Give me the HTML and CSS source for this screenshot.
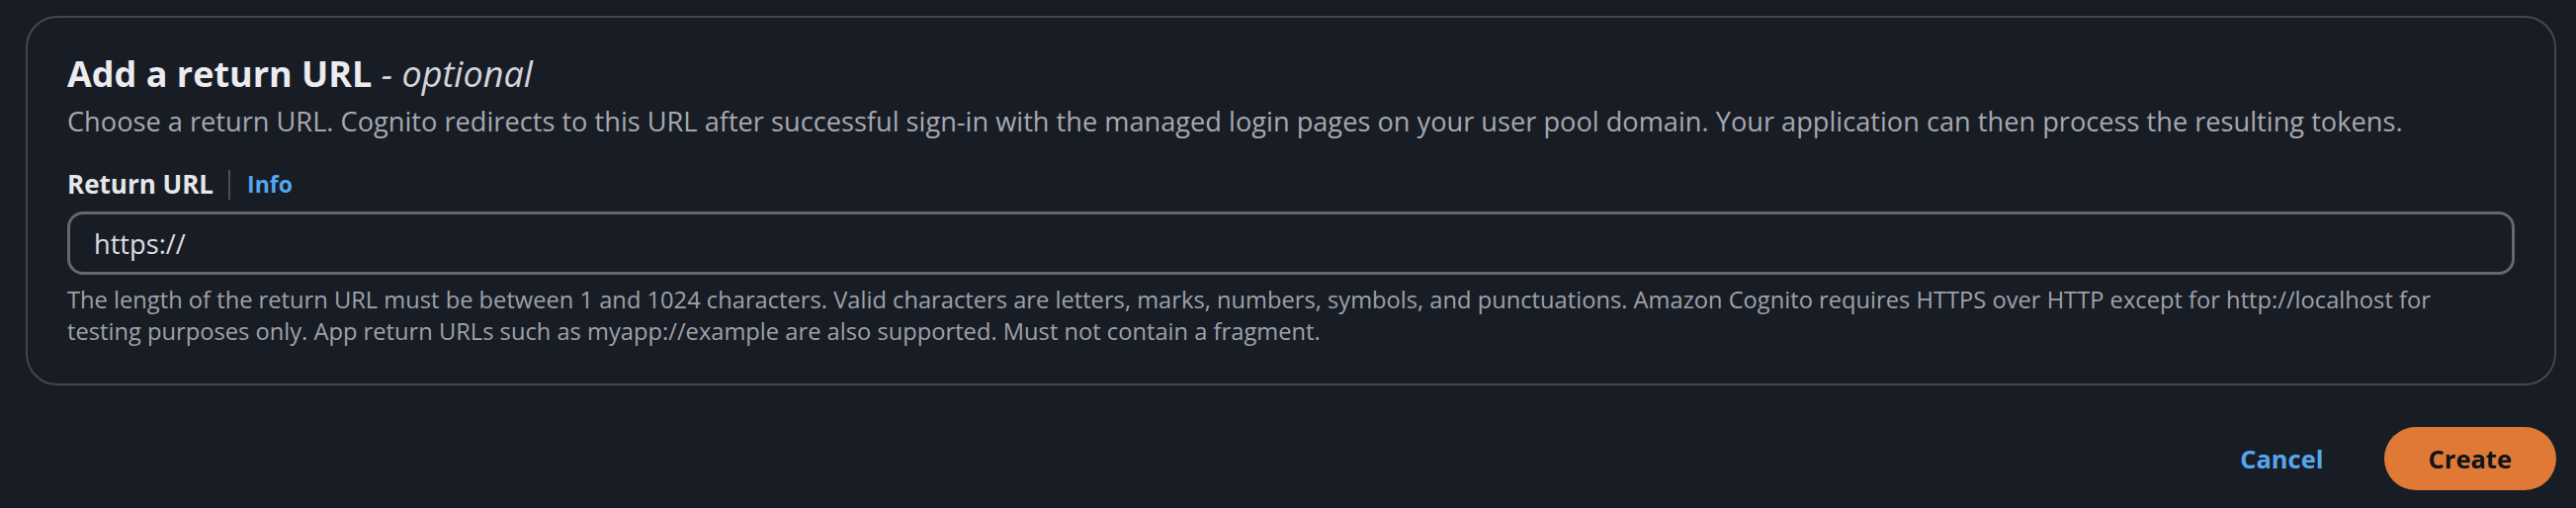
FILE: index.html
```html
<!DOCTYPE html>
<html lang="en">
<head>
<meta charset="utf-8">
<title>Add a return URL</title>
<link rel="stylesheet" href="styles.css">
</head>
<body>
<main class="page">
  <section class="card">
    <header class="card-header">
      <h2 class="title">Add a return URL <span class="optional">- optional</span></h2>
      <p class="description">Choose a return URL. Cognito redirects to this URL after successful sign-in with the managed login pages on your user pool domain. Your application can then process the resulting tokens.</p>
    </header>
    <div class="field">
      <div class="field-label">
        <label for="return-url">Return URL</label>
        <span class="divider"></span>
        <a class="info" href="#">Info</a>
      </div>
      <input class="text-input" id="return-url" type="text" value="https://">
      <p class="hint">The length of the return URL must be between 1 and 1024 characters. Valid characters are letters, marks, numbers, symbols, and punctuations. Amazon Cognito requires HTTPS over HTTP except for http://localhost for testing purposes only. App return URLs such as myapp://example are also supported. Must not contain a fragment.</p>
    </div>
  </section>
  <div class="actions">
    <button class="btn-link" type="button">Cancel</button>
    <button class="btn-primary" type="button">Create</button>
  </div>
</main>
</body>
</html>
```
FILE: styles.css
```css
* { box-sizing: border-box; }

html, body {
  margin: 0;
  background: #181d25;
}

body {
  font-family: "Open Sans", "Noto Sans", sans-serif;
  color: #dedee3;
}

.page {
  width: 2586px;
  padding: 16px 0 0 26px;
}

.card {
  border: 2px solid #43474f;
  border-radius: 32px;
  padding: 35px 40px 37px;
}

.title {
  margin: 0;
  font-size: 36px;
  line-height: 44px;
  font-weight: 700;
  color: #ebebf0;
}

.optional {
  font-weight: 400;
  font-style: italic;
  color: #d4d4da;
}

.description {
  margin: 6px 0 0;
  font-size: 27.2px;
  line-height: 40px;
  color: #a6a8b0;
}

.field {
  margin-top: 21px;
}

.field-label {
  display: flex;
  align-items: center;
  height: 44px;
}

.field-label label {
  font-size: 26px;
  font-weight: 700;
  color: #e6e6eb;
}

.divider {
  width: 2px;
  height: 30px;
  margin: 2px 17px 0 15px;
  background: #4a4e57;
}

.info {
  font-size: 23px;
  font-weight: 700;
  color: #56a6ee;
  text-decoration: none;
}

.text-input {
  display: block;
  width: 100%;
  height: 64px;
  margin-top: 6px;
  padding: 0 24px;
  border: 3px solid #656871;
  border-radius: 16px;
  background: transparent;
  color: #dedee3;
  font-family: inherit;
  font-size: 27.2px;
  outline: none;
}

.hint {
  max-width: 2440px;
  margin: 9px 0 0;
  font-size: 23.7px;
  line-height: 32px;
  color: #9fa1a9;
}

.actions {
  display: flex;
  justify-content: flex-end;
  gap: 16px;
  margin-top: 42px;
}

.actions button {
  height: 64px;
  border: none;
  font-family: inherit;
  font-size: 25.5px;
  font-weight: 700;
  line-height: 64px;
  cursor: pointer;
}

.btn-link {
  padding: 0 45px 0 40px;
  background: transparent;
  color: #56a6ee;
}

.btn-primary {
  padding: 0 45px;
  border-radius: 32px;
  background: #df7935;
  color: #0f141a;
}
```
